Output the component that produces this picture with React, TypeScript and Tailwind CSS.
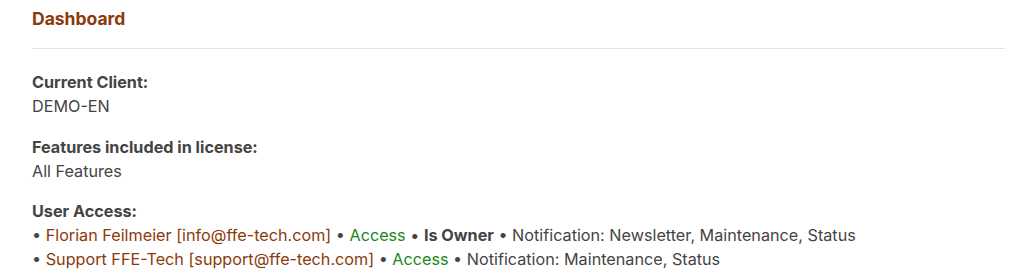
import React from "react";

const Dot = () => <span className="text-[#444]"> • </span>;

export default function App() {
  return (
    <div className="bg-white w-[1030px] h-[278px] pl-8 pr-[25px] pt-[7px] text-[#444] font-['Inter',sans-serif] text-[16.2px] leading-6">
      <h1 className="text-[17.5px] font-bold text-[#8a3a0b] leading-6">Dashboard</h1>
      <div className="mt-[17px] mb-[21px] border-t border-[#e3e3e3]" />
      <div>
        <div className="font-bold">Current Client:</div>
        <div>DEMO-EN</div>
      </div>
      <div className="mt-[16.5px]">
        <div className="font-bold">Features included in license:</div>
        <div>All Features</div>
      </div>
      <div className="mt-[16.5px]">
        <div className="font-bold">User Access:</div>
        <div>
          •{" "}
          <span className="text-[#8a3a0b]">Florian Feilmeier [info@ffe-tech.com]</span>
          <Dot />
          <span className="text-[#16881a]">Access</span>
          <Dot />
          <span className="font-bold">Is Owner</span>
          <Dot />
          Notification: Newsletter, Maintenance, Status
        </div>
        <div>
          •{" "}
          <span className="text-[#8a3a0b]">Support FFE-Tech [support@ffe-tech.com]</span>
          <Dot />
          <span className="text-[#16881a]">Access</span>
          <Dot />
          Notification: Maintenance, Status
        </div>
      </div>
    </div>
  );
}
